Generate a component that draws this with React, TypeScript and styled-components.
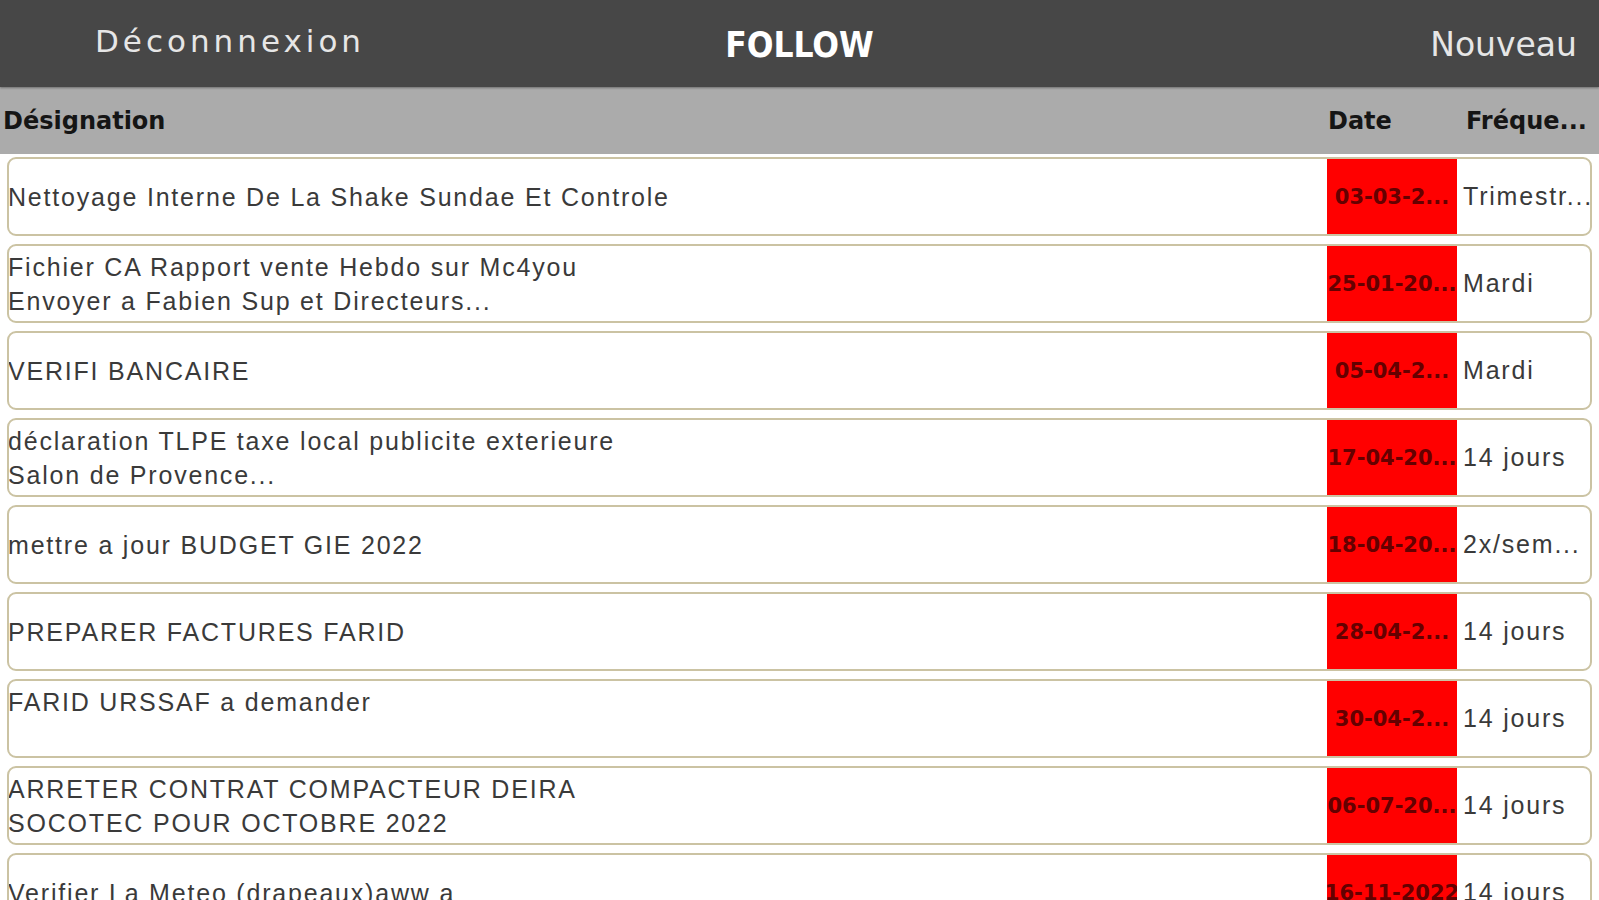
import React from 'react';
import styled, { createGlobalStyle } from 'styled-components';

const GlobalStyle = createGlobalStyle`
  html, body {
    margin: 0;
    padding: 0;
    background: #ffffff;
    overflow: hidden;
  }
  body {
    font-family: "DejaVu Sans", "Liberation Sans", sans-serif;
  }
`;

const COLUMNS = '1318px 130px 1fr';

const NavBar = styled.header`
  display: grid;
  grid-template-columns: 1fr auto 1fr;
  align-items: center;
  height: 87px;
  background: #474747;
  box-shadow: 0 1px 2px rgba(0, 0, 0, 0.35);
  position: relative;
  z-index: 1;
`;

const NavButton = styled.span<{ $align: 'start' | 'end' }>`
  justify-self: ${(p) => p.$align};
  color: #e6e6e6;
  font-size: ${(p) => (p.$align === 'start' ? '31px' : '33px')};
  letter-spacing: ${(p) => (p.$align === 'start' ? '4px' : '0')};
  margin: ${(p) => (p.$align === 'start' ? '-6px 0 0 95px' : '2px 22px 0 0')};
`;

const Title = styled.h1`
  margin: 2px 0 0;
  color: #ffffff;
  font-family: "DejaVu Sans Condensed", "DejaVu Sans", sans-serif;
  font-stretch: condensed;
  font-weight: 700;
  font-size: 35px;
`;

const ColumnHeader = styled.div`
  display: grid;
  grid-template-columns: ${COLUMNS};
  align-items: center;
  height: 67px;
  background: #ababab;
  padding: 0 0 0 3px;
  font-weight: 700;
  font-size: 24px;
  color: #151515;
`;

const HeaderCell = styled.span<{ $pad?: number }>`
  padding-left: ${(p) => p.$pad ?? 0}px;
  white-space: nowrap;
`;

const List = styled.div`
  display: flex;
  flex-direction: column;
  gap: 8px;
  padding: 3px 7px 0 7px;
`;

const Row = styled.div`
  display: grid;
  grid-template-columns: ${COLUMNS};
  height: 75px;
  border: 2px solid #cbc3a3;
  border-radius: 9px;
  background: #ffffff;
  overflow: hidden;
  font-family: "Liberation Sans", Arial, sans-serif;
  font-size: 25px;
  letter-spacing: 1.8px;
  color: #3a3a3a;
`;

const Designation = styled.div`
  display: flex;
  align-items: center;
  white-space: pre-line;
  line-height: 34px;
  margin-left: -1px;
`;

const DateCell = styled.div`
  display: flex;
  align-items: center;
  justify-content: center;
  background: #ff0000;
  color: #640000;
  font-family: "DejaVu Sans", sans-serif;
  font-weight: 700;
  font-size: 21px;
  letter-spacing: 0;
  white-space: nowrap;
  overflow: hidden;
`;

const Frequency = styled.div`
  display: flex;
  align-items: center;
  padding-left: 6px;
  white-space: nowrap;
  overflow: hidden;
`;

type Task = { label: string; date: string; freq: string };

const tasks: Task[] = [
  { label: 'Nettoyage Interne De La Shake Sundae Et Controle', date: '03-03-2...', freq: 'Trimestr...' },
  { label: 'Fichier CA Rapport vente Hebdo sur Mc4you\nEnvoyer a Fabien Sup et Directeurs...', date: '25-01-20...', freq: 'Mardi' },
  { label: 'VERIFI BANCAIRE', date: '05-04-2...', freq: 'Mardi' },
  { label: 'déclaration TLPE taxe local publicite exterieure\nSalon de Provence...', date: '17-04-20...', freq: '14 jours' },
  { label: 'mettre a jour BUDGET GIE 2022', date: '18-04-20...', freq: '2x/sem...' },
  { label: 'PREPARER FACTURES FARID', date: '28-04-2...', freq: '14 jours' },
  { label: 'FARID URSSAF a demander\n\u00a0', date: '30-04-2...', freq: '14 jours' },
  { label: 'ARRETER CONTRAT COMPACTEUR DEIRA\nSOCOTEC POUR OCTOBRE 2022', date: '06-07-20...', freq: '14 jours' },
  { label: 'Verifier La Meteo (drapeaux)aww a', date: '16-11-2022', freq: '14 jours' },
];

export default function App() {
  return (
    <>
      <GlobalStyle />
      <NavBar>
        <NavButton $align="start">Déconnnexion</NavButton>
        <Title>FOLLOW</Title>
        <NavButton $align="end">Nouveau</NavButton>
      </NavBar>
      <ColumnHeader>
        <HeaderCell>Désignation</HeaderCell>
        <HeaderCell $pad={7}>Date</HeaderCell>
        <HeaderCell $pad={15}>Fréque...</HeaderCell>
      </ColumnHeader>
      <List>
        {tasks.map((t) => (
          <Row key={t.label}>
            <Designation>{t.label}</Designation>
            <DateCell>{t.date}</DateCell>
            <Frequency>{t.freq}</Frequency>
          </Row>
        ))}
      </List>
    </>
  );
}
